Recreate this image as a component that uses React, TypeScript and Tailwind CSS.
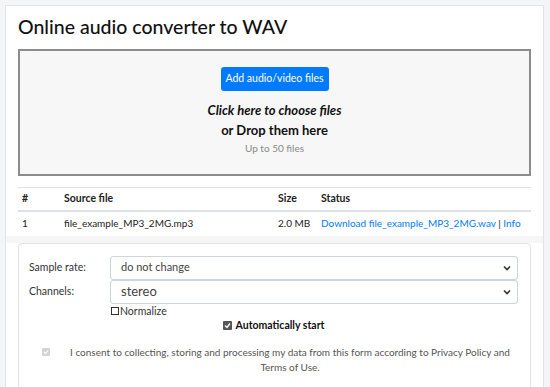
import React from 'react';

const font = { fontFamily: 'Lato, "Noto Sans", Arial, sans-serif' };

function Chevron() {
  return (
    <svg width="8" height="6" viewBox="0 0 8 6" className="text-[#333]">
      <path d="M1 1.5 L4 4.5 L7 1.5" fill="none" stroke="currentColor" strokeWidth="1.6" />
    </svg>
  );
}

function SelectBox({ value, big }: { value: string; big?: boolean }) {
  return (
    <div className="flex h-[24px] flex-1 items-center justify-between rounded-[3px] border border-[#ced4da] bg-white pl-[10px] pr-[6px]">
      <span className={big ? 'text-[13px] text-[#444]' : 'text-[11px] text-[#444]'}>{value}</span>
      <Chevron />
    </div>
  );
}

function DropZone() {
  return (
    <div className="flex h-[127px] flex-col items-center border-2 border-[#8c8c8c] bg-[#f7f7f7] pt-[16px]">
      <button className="h-[24px] w-[108px] whitespace-nowrap rounded-[3px] bg-[#007bff] text-[10.5px] text-white">
        Add audio/video files
      </button>
      <div className="mt-[9px] text-[13px] font-bold italic leading-[20px] text-[#111]">
        Click here to choose files
      </div>
      <div className="text-[13px] font-bold leading-[20px] text-[#111]">or Drop them here</div>
      <div className="text-[10px] leading-[16px] text-[#8a8a8a]">Up to 50 files</div>
    </div>
  );
}

function FileTable() {
  return (
    <table className="mt-[11px] w-full table-fixed border-collapse text-left text-[10.5px] text-[#222]">
      <thead>
        <tr className="h-[23px] border-t border-b-2 border-[#dee2e6]">
          <th className="w-[46px] pl-[4px] font-bold">#</th>
          <th className="w-[214px] font-bold">Source file</th>
          <th className="w-[43px] font-bold">Size</th>
          <th className="font-bold">Status</th>
        </tr>
      </thead>
      <tbody>
        <tr className="h-[25px] text-[10px]">
          <td className="pl-[4px]">1</td>
          <td>file_example_MP3_2MG.mp3</td>
          <td>2.0 MB</td>
          <td className="whitespace-nowrap">
            <span className="text-[#007bff]">Download file_example_MP3_2MG.wav</span>
            <span> | </span>
            <span className="text-[#007bff]">Info</span>
          </td>
        </tr>
      </tbody>
    </table>
  );
}

function Options() {
  return (
    <div className="rounded-[4px] border border-[#e3e3e3] bg-white pb-[14px] pl-[10px] pr-[12px] pt-[12px] text-[10.5px] text-[#333]">
      <div className="flex items-center">
        <div className="w-[81px]">Sample rate:</div>
        <SelectBox value="do not change" />
      </div>
      <div className="flex items-center">
        <div className="w-[81px]">Channels:</div>
        <SelectBox value="stereo" big />
      </div>
      <div className="flex items-center pl-[82px] leading-[14px]">
        <span className="mr-[1px] inline-block h-[8px] w-[8px] border border-[#333] bg-white" />
        <span>Normalize</span>
      </div>
      <div className="flex items-center justify-center font-bold text-[#111]">
        <span className="mr-[4px] flex h-[9px] w-[9px] items-center justify-center rounded-[1px] bg-[#555]">
          <svg width="7" height="7" viewBox="0 0 7 7">
            <path d="M1 3.5 L3 5.5 L6 1.5" fill="none" stroke="white" strokeWidth="1.3" />
          </svg>
        </span>
        <span>Automatically start</span>
      </div>
      <div className="mt-[12px] flex items-start pl-[13px]">
        <span className="mt-[3px] flex h-[8px] w-[8px] shrink-0 items-center justify-center rounded-[1px] bg-[#d4d4d4]">
          <svg width="6" height="6" viewBox="0 0 6 6">
            <path d="M1 3 L2.5 4.5 L5 1.5" fill="none" stroke="white" strokeWidth="1.1" />
          </svg>
        </span>
        <p className="ml-[12px] flex-1 whitespace-nowrap text-center text-[10px] leading-[15px] text-[#555]">
          I consent to collecting, storing and processing my data from this form according to Privacy Policy and
          <br />
          Terms of Use.
        </p>
      </div>
    </div>
  );
}

export default function App() {
  return (
    <div className="h-[387px] overflow-hidden bg-[#f4f5f7] pl-[5px] pr-[6px] pt-[5px]" style={font}>
      <div className="h-[400px] border border-[#e2e3e5] bg-white px-[12px]">
        <h1 className="pt-[6px] text-[19.5px] font-medium leading-[30px] text-[#111]">Online audio converter to WAV</h1>
        <div className="mt-[7px]">
          <DropZone />
        </div>
        <FileTable />
        <div className="-mx-[12px] h-[7px] bg-[#f6f6f6]" />
        <Options />
      </div>
    </div>
  );
}
